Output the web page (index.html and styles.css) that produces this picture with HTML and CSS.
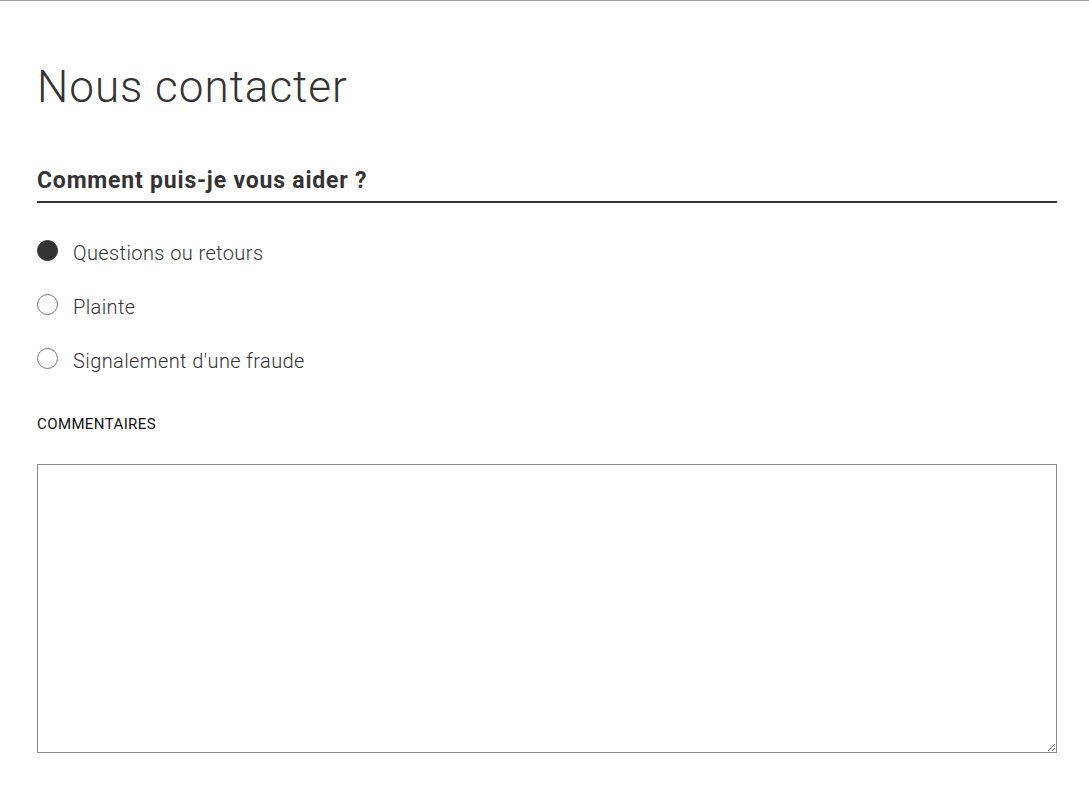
FILE: index.html
```html
<!DOCTYPE html>
<html lang="fr">
<head>
  <meta charset="UTF-8">
  <title>Nous contacter</title>
  <link rel="stylesheet" href="styles.css">
</head>
<body>

  <div class="page">
    <h1 class="title">Nous contacter</h1>

    <form class="contact-form">
      <h2 class="section-title">Comment puis-je vous aider ?</h2>

      <div class="choices">
        <label class="choice">
          <input type="radio" name="motif" value="questions" checked>
          <span>Questions ou retours</span>
        </label>
        <label class="choice">
          <input type="radio" name="motif" value="plainte">
          <span>Plainte</span>
        </label>
        <label class="choice">
          <input type="radio" name="motif" value="fraude">
          <span>Signalement d'une fraude</span>
        </label>
      </div>

      <label class="field-label" for="commentaires">Commentaires</label>
      <textarea id="commentaires" class="comments"></textarea>
    </form>
  </div>

</body>
</html>
```

FILE: styles.css
```css
body {
  font-family: Roboto, 'Liberation Sans', sans-serif;
  margin: 0;
  padding: 0;
  background-color: white;
  color: #333;
  border-top: 1px solid #a0a0a0;
}

.page {
  padding: 60px 32px 0 37px;
}

.title {
  font-size: 44px;
  font-weight: 300;
  line-height: 52px;
  letter-spacing: 1px;
  margin: 0;
  color: #333;
}

.section-title {
  font-size: 23px;
  font-weight: 700;
  line-height: 28px;
  letter-spacing: 0.8px;
  margin: 54px 0 0;
  padding-bottom: 6px;
  border-bottom: 2px solid #333;
  color: #333;
}

.choices {
  display: flex;
  flex-direction: column;
  gap: 24px;
  margin-top: 35px;
}

.choice {
  display: flex;
  align-items: flex-start;
  gap: 15px;
  font-size: 20px;
  font-weight: 300;
  line-height: 30px;
  letter-spacing: 0.4px;
  cursor: pointer;
}

.choice input {
  appearance: none;
  -webkit-appearance: none;
  width: 21px;
  height: 21px;
  margin: 2px 0 0;
  border: 1.5px solid #777;
  border-radius: 50%;
  box-sizing: border-box;
  flex-shrink: 0;
}

.choice input:checked {
  background-color: #333;
  border-color: #333;
}

.field-label {
  display: block;
  margin-top: 38px;
  font-size: 15px;
  line-height: 20px;
  letter-spacing: 0.4px;
  text-transform: uppercase;
  color: #111;
}

.comments {
  display: block;
  box-sizing: border-box;
  width: 100%;
  height: 289px;
  margin-top: 30px;
  border: 1px solid #8a8a8a;
  padding: 8px;
  font-family: inherit;
  font-size: 16px;
  outline: none;
}
```
